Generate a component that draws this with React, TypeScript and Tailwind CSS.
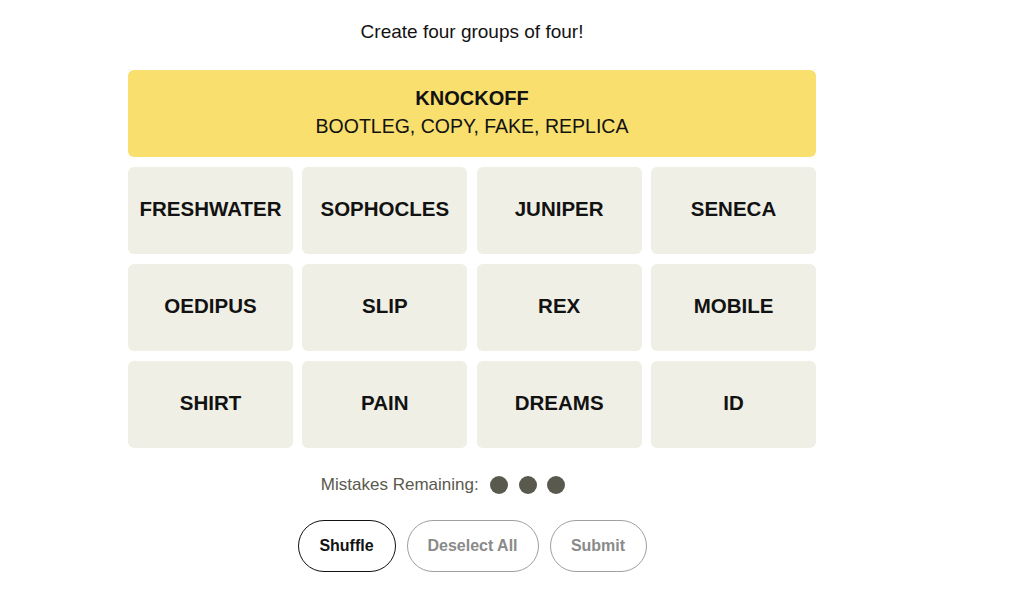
const font = { fontFamily: '"Liberation Sans", Arial, sans-serif' }

const words = [
    'FRESHWATER', 'SOPHOCLES', 'JUNIPER', 'SENECA',
    'OEDIPUS', 'SLIP', 'REX', 'MOBILE',
    'SHIRT', 'PAIN', 'DREAMS', 'ID',
]

const Tile = ({ word }: { word: string }) => (
    <button className="h-[87px] pb-[2px] rounded-md bg-[#efefe6] text-[20.5px] font-bold text-[#121212]">
        {word}
    </button>
)

export default function App() {
    return (
        <div className="min-h-screen bg-white pl-[128px]" style={font}>
            <div className="w-[688px] flex flex-col items-center">
                <p className="mt-[20px] text-[19px] leading-[24px] text-[#121212]">Create four groups of four!</p>

                <div className="mt-[26px] w-full grid grid-cols-4 gap-x-[9.33px] gap-y-[10px]">
                    {/* solved group */}
                    <div className="col-span-4 h-[87px] pb-[4px] rounded-md bg-[#f9df6d] flex flex-col items-center justify-center text-[#121212]">
                        <p className="text-[20px] leading-[28px] font-bold">KNOCKOFF</p>
                        <p className="text-[19.5px] leading-[28px]">BOOTLEG, COPY, FAKE, REPLICA</p>
                    </div>

                    {words.map((w) => (
                        <Tile key={w} word={w} />
                    ))}
                </div>

                <div className="mt-[24px] pr-[58px] flex items-center gap-[10.5px]">
                    <span className="text-[17px] text-[#5a594e] mr-[1px]">Mistakes Remaining:</span>
                    <span className="w-[18px] h-[18px] rounded-full bg-[#5a594e]" />
                    <span className="w-[18px] h-[18px] rounded-full bg-[#5a594e]" />
                    <span className="w-[18px] h-[18px] rounded-full bg-[#5a594e]" />
                </div>

                <div className="mt-[22px] flex gap-[11px]">
                    <button className="h-[52px] w-[98px] rounded-full border border-[#121212] text-[16px] font-bold text-[#121212]">
                        Shuffle
                    </button>
                    <button className="h-[52px] w-[132px] rounded-full border border-[#a0a0a0] text-[16px] font-bold text-[#8a8a8a]">
                        Deselect All
                    </button>
                    <button className="h-[52px] w-[97px] rounded-full border border-[#a0a0a0] text-[16px] font-bold text-[#8a8a8a]">
                        Submit
                    </button>
                </div>
            </div>
        </div>
    )
}
